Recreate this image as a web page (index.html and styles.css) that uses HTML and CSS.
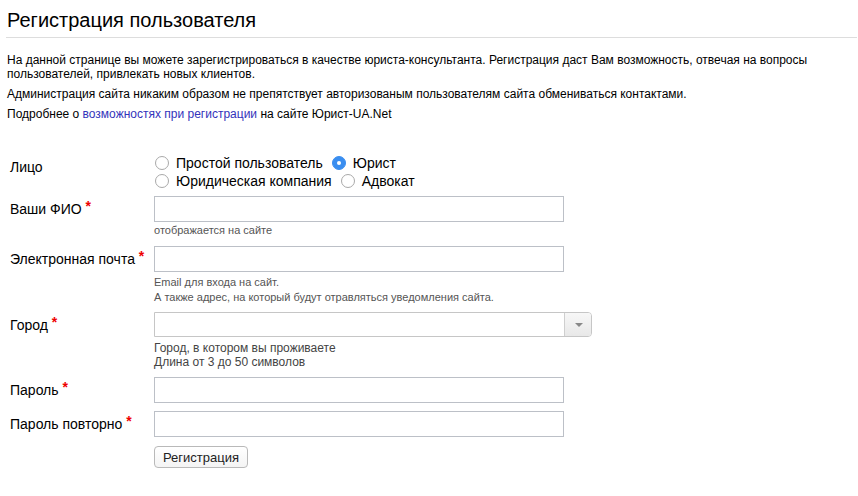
FILE: index.html
```html
<!DOCTYPE html>
<html lang="ru">
<head>
    <meta charset="UTF-8">
    <title>Регистрация пользователя</title>
    <link rel="stylesheet" href="styles.css">
</head>
<body>
<div class="page">
    <!-- Title -->
    <h1 class="page-title">Регистрация пользователя</h1>

    <!-- Intro text -->
    <div class="intro">
        <p>На данной странице вы можете зарегистрироваться в качестве юриста-консультанта. Регистрация даст Вам возможность, отвечая на вопросы пользователей, привлекать новых клиентов.</p>
        <p>Администрация сайта никаким образом не препятствует авторизованым пользователям сайта обмениваться контактами.</p>
        <p>Подробнее о <a href="#">возможностях при регистрации</a> на сайте Юрист-UA.Net</p>
    </div>

    <!-- Form -->
    <form class="reg-form" onsubmit="return false">
        <div class="row row-radios">
            <div class="row-label">Лицо</div>
            <div class="row-field">
                <div class="radio-line">
                    <label class="radio"><input type="radio" name="kind"> Простой пользователь</label>
                    <label class="radio"><input type="radio" name="kind" checked> Юрист</label>
                </div>
                <div class="radio-line">
                    <label class="radio"><input type="radio" name="kind"> Юридическая компания</label>
                    <label class="radio"><input type="radio" name="kind"> Адвокат</label>
                </div>
            </div>
        </div>

        <div class="row">
            <label class="row-label">Ваши ФИО <span class="req">*</span></label>
            <div class="row-field">
                <input type="text" class="text-input">
                <div class="hint">отображается на сайте</div>
            </div>
        </div>

        <div class="row">
            <label class="row-label">Электронная почта <span class="req">*</span></label>
            <div class="row-field">
                <input type="text" class="text-input">
                <div class="hint hint-email">Email для входа на сайт.</div>
                <div class="hint hint-email">А также адрес, на который будут отравляться уведомления сайта.</div>
            </div>
        </div>

        <div class="row">
            <label class="row-label">Город <span class="req">*</span></label>
            <div class="row-field">
                <div class="select">
                    <span class="select-value"></span>
                    <span class="select-arrow"></span>
                </div>
                <div class="hint hint-block">Город, в котором вы проживаете<br>Длина от 3 до 50 символов</div>
            </div>
        </div>

        <div class="row">
            <label class="row-label">Пароль <span class="req">*</span></label>
            <div class="row-field">
                <input type="password" class="text-input">
            </div>
        </div>

        <div class="row">
            <label class="row-label">Пароль повторно <span class="req">*</span></label>
            <div class="row-field">
                <input type="password" class="text-input">
            </div>
        </div>

        <div class="row">
            <div class="row-label"></div>
            <div class="row-field">
                <button type="submit" class="btn">Регистрация</button>
            </div>
        </div>
    </form>
</div>
</body>
</html>
```

FILE: styles.css
```css
/* Base */
* {
    box-sizing: border-box;
}
body {
    margin: 0;
    font-family: "Liberation Sans", Arial, sans-serif;
    color: #000;
    background: #fff;
}

.page {
    padding: 0 1px 0 7px;
}

/* Title */
.page-title {
    margin: 0 0 0 -1px;
    padding: 8px 0 5px 1px;
    font-size: 20px;
    font-weight: normal;
    line-height: 24px;
    border-bottom: 1px solid #ddd;
}

/* Intro */
.intro {
    margin-top: 15px;
    font-size: 12px;
    line-height: 14px;
}
.intro p {
    margin: 0 0 6px;
}
.intro a {
    color: #3333bb;
    text-decoration: none;
}

/* Form */
.reg-form {
    margin-top: 33px;
    padding-left: 3px;
}
.row {
    display: flex;
    margin-bottom: 8px;
}
.row-radios {
    margin-bottom: 6px;
}
.row-label {
    width: 144px;
    flex: none;
    padding-top: 4px;
    font-size: 14px;
    line-height: 18px;
}
.req {
    color: #e00;
    font-weight: bold;
    position: relative;
    top: -3px;
}
.row-field {
    flex: none;
    width: 440px;
}

/* Radios */
.radio-line {
    display: flex;
    gap: 8px;
    font-size: 14px;
    line-height: 18px;
}
.radio {
    display: flex;
    align-items: center;
    gap: 7px;
}
.radio input {
    appearance: none;
    -webkit-appearance: none;
    margin: 0 0 0 1px;
    width: 14px;
    height: 14px;
    border: 1px solid #a9a9a9;
    border-radius: 50%;
    background: #fff;
    position: relative;
}
.radio input:checked {
    border-color: #3a8ef0;
    background: #3a8ef0;
}
.radio input:checked::after {
    content: "";
    position: absolute;
    left: 4px;
    top: 4px;
    width: 4px;
    height: 4px;
    border-radius: 50%;
    background: #fff;
}

/* Inputs */
.text-input {
    display: block;
    width: 410px;
    height: 26px;
    margin: 0;
    border: 1px solid #bcc0c7;
    border-radius: 0;
    padding: 2px 5px;
    font-family: inherit;
    font-size: 13px;
}

.hint {
    font-size: 11px;
    line-height: 15px;
    color: #555;
    margin-top: 1px;
}
.hint-email {
    margin-top: 3px;
}
.hint-email + .hint-email {
    margin-top: 0;
    line-height: 14px;
}
.hint-block {
    font-size: 12px;
    line-height: 14px;
    margin-top: 4px;
    color: #444;
}

/* Select */
.select {
    display: flex;
    width: 438px;
    height: 25px;
    border: 1px solid #c6c6c6;
    border-radius: 0 4px 4px 0;
    background: #fff;
}
.select-value {
    flex: 1;
}
.select-arrow {
    width: 27px;
    border-left: 1px solid #cfcfcf;
    border-radius: 0 3px 3px 0;
    background: linear-gradient(#f7f7f7, #e8e8e8);
    position: relative;
}
.select-arrow::after {
    content: "";
    position: absolute;
    left: 10px;
    top: 10px;
    border-left: 4px solid transparent;
    border-right: 4px solid transparent;
    border-top: 4px solid #888;
}

/* Button */
.btn {
    margin-top: 1px;
    height: 22px;
    padding: 0 8px;
    border: 1px solid #b9b9b9;
    border-radius: 4px;
    background: linear-gradient(#fff, #f4f4f4);
    font-family: inherit;
    font-size: 13px;
    color: #222;
    cursor: pointer;
}
```
